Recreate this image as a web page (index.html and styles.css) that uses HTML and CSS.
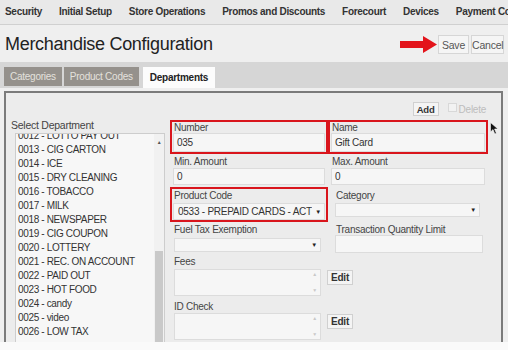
FILE: index.html
```html
<!DOCTYPE html>
<html lang="en">
<head>
    <meta charset="UTF-8">
    <meta name="viewport" content="width=device-width, initial-scale=1.0">
    <title>Merchandise Configuration</title>
    <link rel="stylesheet" href="styles.css">
</head>
<body>
    <div class="page">
        <nav class="topnav">
            <a href="#">Security</a>
            <a href="#">Initial Setup</a>
            <a href="#">Store Operations</a>
            <a href="#">Promos and Discounts</a>
            <a href="#">Forecourt</a>
            <a href="#">Devices</a>
            <a href="#">Payment Configuration</a>
        </nav>

        <header class="titlebar">
            <h1>Merchandise Configuration</h1>
            <div class="actions">
                <svg class="arrow" width="37" height="17" viewBox="0 0 37 17">
                    <polygon points="0,5 23,5 23,0 37,8.5 23,17 23,12 0,12" fill="#e3141b"/>
                </svg>
                <button class="btn save">Save</button>
                <button class="btn cancel">Cancel</button>
            </div>
        </header>

        <div class="tabbar">
            <span class="tab">Categories</span>
            <span class="tab">Product Codes</span>
            <span class="tab active">Departments</span>
        </div>

        <section class="panel">
            <div class="panel-tools">
                <button class="btn-small">Add</button>
                <label class="delete"><span class="checkbox"></span>Delete</label>
            </div>

            <div class="panel-body">
                <div class="dept-col">
                    <div class="dept-label">Select Department</div>
                    <div class="listbox">
                        <ul>
                            <li>0012 - LOTTO PAY OUT</li>
                            <li>0013 - CIG CARTON</li>
                            <li>0014 - ICE</li>
                            <li>0015 - DRY CLEANING</li>
                            <li>0016 - TOBACCO</li>
                            <li>0017 - MILK</li>
                            <li>0018 - NEWSPAPER</li>
                            <li>0019 - CIG COUPON</li>
                            <li>0020 - LOTTERY</li>
                            <li>0021 - REC. ON ACCOUNT</li>
                            <li>0022 - PAID OUT</li>
                            <li>0023 - HOT FOOD</li>
                            <li>0024 - candy</li>
                            <li>0025 - video</li>
                            <li>0026 - LOW TAX</li>
                        </ul>
                        <div class="scrollbar">
                            <span class="scroll-up">&#9650;</span>
                            <span class="thumb"></span>
                        </div>
                    </div>
                </div>

                <div class="form-grid">
                    <div class="field marked">
                        <label>Number</label>
                        <div class="input">035</div>
                    </div>
                    <div class="field marked">
                        <label>Name</label>
                        <div class="input">Gift Card</div>
                    </div>

                    <div class="field row2">
                        <label>Min. Amount</label>
                        <div class="input">0</div>
                    </div>
                    <div class="field row2">
                        <label>Max. Amount</label>
                        <div class="input">0</div>
                    </div>

                    <div class="field marked row3">
                        <label>Product Code</label>
                        <div class="select tall"><span>0533 - PREPAID CARDS - ACT</span><i>&#9660;</i></div>
                    </div>
                    <div class="field row3 inset">
                        <label>Category</label>
                        <div class="select short"><span></span><i>&#9660;</i></div>
                    </div>

                    <div class="field row4">
                        <label>Fuel Tax Exemption</label>
                        <div class="select short narrow"><span></span><i>&#9660;</i></div>
                    </div>
                    <div class="field row4 inset">
                        <label>Transaction Quantity Limit</label>
                        <div class="input"></div>
                    </div>

                    <div class="field row5">
                        <label>Fees</label>
                        <div class="textarea"><i>&#9650;</i><i>&#9660;</i></div>
                    </div>
                    <div class="edit-cell">
                        <button class="btn-small edit">Edit</button>
                    </div>

                    <div class="field row6">
                        <label>ID Check</label>
                        <div class="textarea"><i>&#9650;</i><i>&#9660;</i></div>
                    </div>
                    <div class="edit-cell">
                        <button class="btn-small edit">Edit</button>
                    </div>
                </div>
            </div>

            <svg class="cursor" width="9" height="13" viewBox="0 0 9 13">
                <polygon points="0.5,0.5 0.5,10 3,7.6 4.8,12 6.4,11.3 4.6,7 8,7" fill="#111" stroke="#fff" stroke-width="0.6"/>
            </svg>
        </section>
    </div>
</body>
</html>
```

FILE: styles.css
```css
body {
    margin: 0;
    font-family: "Liberation Sans", Arial, sans-serif;
    font-size: 10px;
    letter-spacing: -0.25px;
    color: #333;
    background-color: #fafafa;
}
.page {
    height: 342px;
    overflow: hidden;
    background-color: #efefef;
}

/* top menu */
.topnav {
    height: 25px;
    box-sizing: border-box;
    display: flex;
    align-items: center;
    gap: 17px;
    padding: 0 0 1px 5px;
    background-color: #e9e9e9;
    border-bottom: 1px solid #d0d0d0;
    white-space: nowrap;
    overflow: hidden;
}
.topnav a {
    color: #333;
    font-weight: bold;
    letter-spacing: -0.3px;
    text-decoration: none;
}

/* title + save */
.titlebar {
    height: 37px;
    box-sizing: border-box;
    padding: 2px 4px 0 5px;
    display: flex;
    align-items: center;
}
.titlebar h1 {
    margin: 0;
    font-size: 18px;
    font-weight: normal;
    letter-spacing: -0.3px;
    color: #222;
}
.actions {
    margin-left: auto;
    display: flex;
    align-items: center;
    gap: 2px;
}
.arrow {
    margin-right: -1px;
}
.btn {
    height: 19px;
    padding: 0;
    border: 1px solid #d6d6d6;
    background-color: #f5f5f5;
    color: #555;
    font-family: inherit;
    font-size: 10.5px;
    letter-spacing: -0.2px;
}
.save {
    width: 31px;
}
.cancel {
    width: 33px;
}

/* tabs */
.tabbar {
    height: 26px;
    box-sizing: border-box;
    display: flex;
    align-items: flex-end;
    gap: 2px;
    padding: 0 0 2px 4px;
    background-color: #d6d6d6;
}
.tab {
    height: 19px;
    box-sizing: border-box;
    padding: 4px 6px 0;
    background-color: #95918c;
    color: #e4e1dd;
}
.tab.active {
    height: 21px;
    margin: 0 0 -2px 2px;
    padding: 5px 7px 0;
    background-color: #fcfcfc;
    color: #222;
    font-weight: bold;
}

/* panel */
.panel {
    position: relative;
    height: 260px;
    margin: 3px 5px 0 4px;
    border: 2px solid #7b7b7b;
    border-bottom: none;
    background-color: #ececec;
}
.panel-tools {
    display: flex;
    justify-content: flex-end;
    align-items: center;
    gap: 9px;
    padding: 9px 15px 0 0;
    height: 14px;
}
.btn-small {
    width: 26px;
    height: 14px;
    padding: 0;
    border: 1px solid #d0d0d0;
    background-color: #f4f4f4;
    color: #333;
    font-family: inherit;
    font-size: 9.5px;
    font-weight: bold;
    letter-spacing: -0.2px;
}
.delete {
    display: flex;
    align-items: center;
    gap: 2px;
    color: #bdbdbd;
}
.checkbox {
    width: 7px;
    height: 7px;
    border: 1px solid #d8d8d8;
    background-color: #f2f2f2;
    margin-bottom: 4px;
}
.panel-body {
    display: flex;
    margin-top: 4px;
}

/* department list */
.dept-col {
    width: 164px;
    flex-shrink: 0;
}
.dept-label {
    padding-left: 5px;
    line-height: 11px;
    font-size: 10.5px;
    color: #444;
}
.listbox {
    display: flex;
    width: 148px;
    height: 215px;
    margin: 2px 0 0 9px;
    border: 1px solid #cdcdcd;
    background-color: #f7f7f7;
    overflow: hidden;
}
.listbox ul {
    flex: 1;
    margin: -5px 0 0;
    padding: 0 0 0 2px;
    list-style: none;
}
.listbox li {
    line-height: 14px;
    letter-spacing: -0.35px;
    color: #333;
    white-space: nowrap;
}
.scrollbar {
    width: 10px;
    display: flex;
    flex-direction: column;
    align-items: center;
    background-color: #f1f1f1;
}
.scroll-up {
    font-size: 5px;
    line-height: 16px;
    color: #555;
}
.thumb {
    width: 8px;
    flex: 1;
    margin-top: 101px;
    background-color: #c9c9c9;
}

/* form */
.form-grid {
    display: grid;
    grid-template-columns: 158px 160px;
    grid-template-rows: 34px 33px 35px 32px 44px 60px;
    align-items: start;
}
.field {
    box-sizing: border-box;
    border: 2px solid transparent;
    padding: 0 1px;
}
.field.marked {
    border-color: #d9151c;
}
.field label {
    display: block;
    height: 11px;
    padding-left: 1px;
    line-height: 11px;
    color: #444;
}
.field.inset {
    padding-left: 5px;
}
.input {
    height: 19px;
    box-sizing: border-box;
    padding: 0 3px;
    line-height: 17px;
    border: 1px solid #dcdcdc;
    background-color: #f6f6f6;
    color: #333;
    white-space: nowrap;
}
.row2 .input {
    height: 17px;
    line-height: 15px;
    margin-top: 1px;
}
.inset .input {
    height: 18px;
    margin: 0 2px 0 0;
}
.row3 {
    padding-top: 1px;
}
.select {
    box-sizing: border-box;
    display: flex;
    justify-content: space-between;
    align-items: center;
    margin-top: 2px;
    padding: 0 3px 0 4px;
    border: 1px solid #dcdcdc;
    background-color: #f6f6f6;
    white-space: nowrap;
    overflow: hidden;
}
.select.tall {
    height: 17px;
}
.select.short {
    height: 14px;
    margin-right: 5px;
}
.select.narrow {
    margin: 2px 4px 0 1px;
}
.select span {
    overflow: hidden;
}
.select i {
    font-style: normal;
    font-size: 6px;
    line-height: 6px;
    color: #222;
    padding-left: 2px;
}
.row4 .select {
    margin-top: 3px;
}
.textarea {
    height: 27px;
    box-sizing: border-box;
    margin: 2px 4px 0 1px;
    padding: 2px 3px;
    border: 1px solid #dcdcdc;
    background-color: #f6f6f6;
    display: flex;
    flex-direction: column;
    justify-content: space-between;
    align-items: flex-end;
}
.row6 {
    padding-top: 1px;
}
.row6 .textarea {
    margin-top: 1px;
}
.textarea i {
    font-style: normal;
    font-size: 5px;
    line-height: 5px;
    color: #c8c8c8;
}
.edit-cell {
    margin-left: -1px;
    padding-top: 16px;
    line-height: 0;
}
.edit {
    height: 15px;
    font-size: 10px;
    line-height: 13px;
}

.cursor {
    position: absolute;
    left: 484px;
    top: 29px;
}
```
